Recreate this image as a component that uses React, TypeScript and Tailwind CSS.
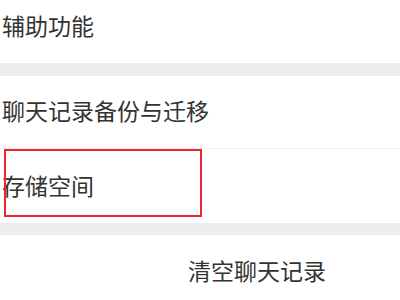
export default function App() {
  const font = { fontFamily: '"Noto Sans CJK SC", "Noto Sans", sans-serif' };
  return (
    <div className="w-[400px] h-[300px] overflow-hidden bg-white text-[#333333]" style={font}>
      <div className="h-[63px] flex items-center pl-[2px] pb-[12px] text-[23px] leading-none">辅助功能</div>
      <div className="h-[13px] bg-[#ededed]" />
      <div className="h-[72px] flex items-center pl-[2px] pb-[4px] text-[23px] leading-none">聊天记录备份与迁移</div>
      <div className="h-px bg-[#f0f0f0]" />
      <div className="relative h-[74px] flex items-center pl-[2px] pb-[2px] text-[23px] leading-none">
        存储空间
        <div className="absolute left-[4px] top-0 w-[198px] h-[68px] border-2 border-[#ee2530]" />
      </div>
      <div className="h-[12px] bg-[#ededed]" />
      <div className="h-[65px] flex items-center pl-[188px] pt-[6px] text-[23px] leading-none">清空聊天记录</div>
    </div>
  );
}
